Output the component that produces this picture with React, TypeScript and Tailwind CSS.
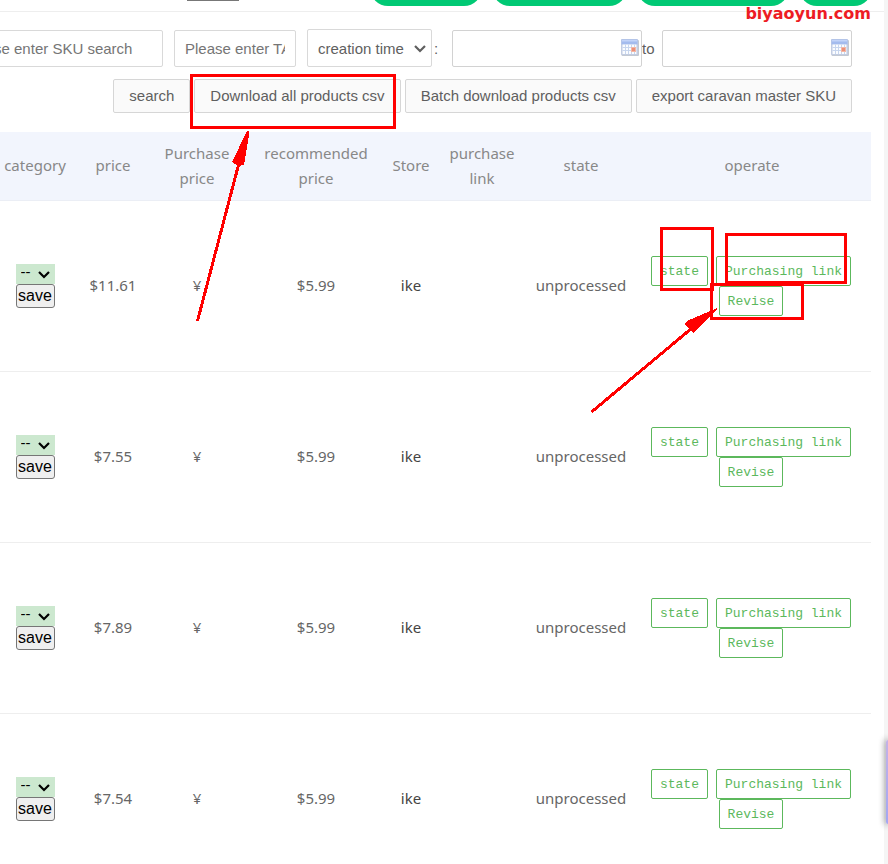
import type { ReactNode } from 'react';

const products = [
  { id: 1, price: '$11.61', recommended: '$5.99', store: 'ike', state: 'unprocessed' },
  { id: 2, price: '$7.55', recommended: '$5.99', store: 'ike', state: 'unprocessed' },
  { id: 3, price: '$7.89', recommended: '$5.99', store: 'ike', state: 'unprocessed' },
  { id: 4, price: '$7.54', recommended: '$5.99', store: 'ike', state: 'unprocessed' },
];

const columns = [
  { label: 'category', width: 'w-[84px]' },
  { label: 'price', width: 'w-[72px]' },
  { label: 'Purchase price', width: 'w-[96px] px-2' },
  { label: 'recommended price', width: 'w-[142px] px-2' },
  { label: 'Store', width: 'w-[48px]' },
  { label: 'purchase link', width: 'w-[94px] px-2' },
  { label: 'state', width: 'w-[104px]' },
  { label: 'operate', width: '' },
];

function Chevron({ className }: { className: string }) {
  return (
    <svg
      className={`pointer-events-none absolute ${className}`}
      width="12"
      height="8"
      viewBox="0 0 12 8"
      fill="none"
      stroke="currentColor"
      strokeWidth="2.2"
      aria-hidden="true"
    >
      <path d="M1 1l5 5 5-5" />
    </svg>
  );
}

function CalendarIcon() {
  return (
    <svg
      className="pointer-events-none absolute right-[3px] top-[9px]"
      width="18"
      height="17"
      viewBox="0 0 18 17"
      aria-hidden="true"
    >
      <rect x="0.5" y="1" width="17.5" height="16" rx="1" fill="#c3c9d2" />
      <rect x="0" y="0" width="17" height="16" rx="1" fill="#c3cde2" />
      <rect x="0.5" y="0.5" width="16" height="5" fill="#a3bbee" />
      <rect x="1" y="1" width="15" height="1.5" fill="#c2d3f8" />
      <rect x="1.5" y="5.5" width="14" height="9.5" fill="#fafcff" />
      <path
        d="M1.5 8.5h14M1.5 11.5h14M4.5 5.5v9.5M7.5 5.5v9.5M10.5 5.5v9.5M13.5 5.5v9.5"
        stroke="#c8d6ee"
        fill="none"
      />
      <rect x="10" y="8" width="5" height="5" fill="#f3b8a6" />
      <rect x="11" y="9" width="3" height="3" fill="#ec9078" />
    </svg>
  );
}

function DateField({ label }: { label: string }) {
  return (
    <div className="relative shrink-0">
      <input
        type="text"
        aria-label={label}
        className="block h-[37px] w-[190px] rounded-xs border border-[#d2d2d2] bg-white px-2.5"
      />
      <CalendarIcon />
    </div>
  );
}

function ToolbarButton({ children }: { children: ReactNode }) {
  return (
    <button
      type="button"
      className="h-[34px] shrink-0 rounded-xs border border-[#d6d6d6] bg-[#fafafa] px-[15px] whitespace-nowrap text-[#5f5f5f]"
    >
      {children}
    </button>
  );
}

function RowButton({ children }: { children: ReactNode }) {
  return (
    <button
      type="button"
      className="h-[30px] rounded-xs border border-[#5cb85c] bg-white px-2 pt-0.5 font-['Liberation_Mono',monospace] text-[13px] text-[#5cb85c]"
    >
      {children}
    </button>
  );
}

function Annotations() {
  return (
    <svg
      className="pointer-events-none absolute left-0 top-0"
      width="888"
      height="864"
      viewBox="0 0 888 864"
      fill="none"
      stroke="#ff0000"
      strokeWidth="3"
      shapeRendering="crispEdges"
      aria-hidden="true"
    >
      <rect x="191.5" y="75.5" width="203" height="52" />
      <rect x="661.5" y="228.5" width="51" height="61" />
      <rect x="726.5" y="234.5" width="119" height="48" />
      <rect x="711.5" y="284.5" width="91" height="34" />
      <path d="M197.5 321L239 163M591.5 412L692 328" />
      <path
        d="M247 131h2l0 4-5 30-6 1-6-4zM717 308v2l-24 23-8-9 2-3z"
        fill="#ff0000"
        stroke="none"
      />
    </svg>
  );
}

export default function App() {
  return (
    <div className="relative h-screen overflow-hidden bg-[#f5f5f5] pr-1 font-['Liberation_Sans',Arial,sans-serif] text-[15px] text-[#5f5f5f]">
      <main className="h-full overflow-hidden bg-white">
        <header className="flex h-3 items-end justify-between overflow-hidden border-b border-[#eeeeee] pr-3 pb-[5px]">
          <div className="mb-[5px] ml-[187px] h-px w-[52px] bg-[#777777]" />
          <nav className="flex gap-2.5">
            <button type="button" aria-label="Add" className="h-9 w-[112px] rounded-full bg-[#00c974]" />
            <button type="button" aria-label="Import" className="h-9 w-[135px] rounded-full bg-[#00c974]" />
            <button type="button" aria-label="Export" className="h-9 w-[152px] rounded-full bg-[#00c974]" />
            <button type="button" aria-label="Help" className="h-9 w-[73px] rounded-full bg-[#00c974]" />
          </nav>
        </header>

        <form className="pr-8 pt-[17px]">
          <div className="flex items-end justify-end">
            <input
              type="text"
              aria-label="SKU"
              placeholder="Please enter SKU search"
              className="mr-[11px] h-[37px] w-[210px] shrink-0 rounded-xs border border-[#d9d9d9] px-2.5 placeholder:text-[#757575]"
            />
            <input
              type="text"
              aria-label="TAG"
              placeholder="Please enter TAG search"
              className="mr-[11px] h-[37px] w-[122px] shrink-0 rounded-xs border border-[#d9d9d9] px-2.5 placeholder:text-[#757575]"
            />
            <div className="relative shrink-0">
              <select
                aria-label="Sort by"
                className="block h-[38px] w-[125px] appearance-none rounded-xs border border-[#d9d9d9] bg-white pt-0.5 pl-2.5"
              >
                <option>creation time</option>
              </select>
              <Chevron className="right-1.5 top-4" />
            </div>
            <span className="w-5 shrink-0 pl-0.5 leading-[37px]">:</span>
            <DateField label="Start date" />
            <span className="w-5 shrink-0 leading-[37px]">to</span>
            <DateField label="End date" />
          </div>
          <div className="mt-3 flex justify-end gap-1">
            <ToolbarButton>search</ToolbarButton>
            <ToolbarButton>Download all products csv</ToolbarButton>
            <ToolbarButton>Batch download products csv</ToolbarButton>
            <ToolbarButton>export caravan master SKU</ToolbarButton>
          </div>
        </form>

        <div className="-ml-[7px] mt-[19px] pr-[13px]">
          <table className="w-full table-fixed border-collapse text-center font-['Noto_Sans',sans-serif] text-[15px] leading-[25px]">
            <thead>
              <tr className="h-[68px] border-b border-[#ebeef5] bg-[#f2f5fd] text-[#888888]">
                {columns.map((column) => (
                  <th key={column.label} className={`py-0 font-normal ${column.width}`}>
                    {column.label}
                  </th>
                ))}
              </tr>
            </thead>
            <tbody>
              {products.map((product) => (
                <tr key={product.id} className="h-[171px] border-b border-[#eeeeee] text-[#666666]">
                  <td>
                    <div className="mx-auto w-[39px] font-['Liberation_Sans',Arial,sans-serif] text-black">
                      <div className="relative">
                        <select
                          aria-label="Category"
                          className="block h-5 w-full appearance-none bg-[#cce8cf] pb-1 pl-[5px] text-[15px] leading-4"
                        >
                          <option>--</option>
                        </select>
                        <Chevron className="right-[5px] top-[7px]" />
                      </div>
                      <button
                        type="button"
                        className="block h-6 w-full rounded-[3px] border border-[#767676] bg-[#efefef] text-base leading-5"
                      >
                        save
                      </button>
                    </div>
                  </td>
                  <td>{product.price}</td>
                  <td>¥</td>
                  <td>{product.recommended}</td>
                  <td className="text-[#444444]">{product.store}</td>
                  <td />
                  <td>{product.state}</td>
                  <td className="pr-0.5">
                    <div className="flex flex-wrap justify-center gap-x-2">
                      <RowButton>state</RowButton>
                      <RowButton>Purchasing link</RowButton>
                      <RowButton>Revise</RowButton>
                    </div>
                  </td>
                </tr>
              ))}
            </tbody>
          </table>
        </div>
      </main>

      <div className="absolute right-[17px] top-0 font-['DejaVu_Sans',sans-serif] text-base leading-7 font-bold text-[#ed1c24]">
        biyaoyun.com
      </div>
      <div className="absolute right-0 top-[740px] h-[84px] w-[2px] rounded-l-sm bg-linear-to-b from-[#c4b2e6] to-[#a3a6f2] shadow-[0_0_6px_1px_#888888]" />
      <Annotations />
    </div>
  );
}
